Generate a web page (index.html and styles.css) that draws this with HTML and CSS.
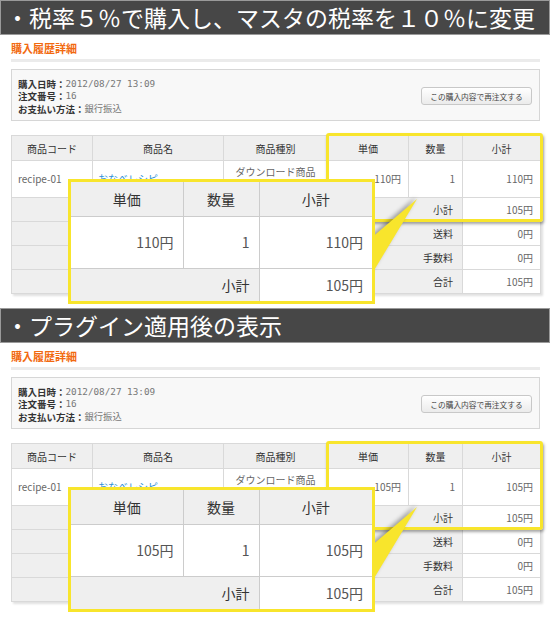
FILE: index.html
```html
<!DOCTYPE html>
<html lang="ja">
<head>
<meta charset="utf-8">
<title>購入履歴詳細</title>
<link rel="stylesheet" href="styles.css">
</head>
<body>
<section class="shot">
  <h1 class="bar">・税率５％で購入し、マスタの税率を１０％に変更</h1>
  <div class="page">
    <h2 class="page-title">購入履歴詳細</h2>
    <div class="info">
      <dl class="info-list">
        <div class="info-row"><dt>購入日時：</dt><dd>2012/08/27 13:09</dd></div>
        <div class="info-row"><dt>注文番号：</dt><dd>16</dd></div>
        <div class="info-row"><dt>お支払い方法：</dt><dd>銀行振込</dd></div>
      </dl>
      <button class="reorder">この購入内容で再注文する</button>
    </div>
    <table class="items">
      <colgroup>
        <col class="c-code"><col class="c-name"><col class="c-kind"><col class="c-price"><col class="c-qty"><col class="c-sub">
      </colgroup>
      <tr class="head">
        <th>商品コード</th><th>商品名</th><th>商品種別</th><th>単価</th><th>数量</th><th>小計</th>
      </tr>
      <tr class="item">
        <td class="code">recipe-01</td>
        <td class="name"><a href="#">おなべレシピ</a></td>
        <td class="kind">ダウンロード商品</td>
        <td class="num">110円</td>
        <td class="num">1</td>
        <td class="num">110円</td>
      </tr>
      <tr class="sum"><th colspan="5">小計</th><td class="num">105円</td></tr>
      <tr class="sum"><th colspan="5">送料</th><td class="num">0円</td></tr>
      <tr class="sum"><th colspan="5">手数料</th><td class="num">0円</td></tr>
      <tr class="sum"><th colspan="5">合計</th><td class="num">105円</td></tr>
    </table>
  </div>
  <div class="highlight"></div>
  <svg class="pointer" viewBox="0 0 70 90" width="70" height="90"><polygon points="8,50 55,10 8,88" fill="#f8e52c"/></svg>
  <div class="callout">
    <table class="zoom">
      <colgroup><col class="z-price"><col class="z-qty"><col class="z-sub"></colgroup>
      <tr class="z-head"><th>単価</th><th>数量</th><th>小計</th></tr>
      <tr class="z-item"><td>110円</td><td>1</td><td>110円</td></tr>
      <tr class="z-sum"><th colspan="2">小計</th><td>105円</td></tr>
    </table>
  </div>
</section>

<section class="shot">
  <h1 class="bar">・プラグイン適用後の表示</h1>
  <div class="page">
    <h2 class="page-title">購入履歴詳細</h2>
    <div class="info">
      <dl class="info-list">
        <div class="info-row"><dt>購入日時：</dt><dd>2012/08/27 13:09</dd></div>
        <div class="info-row"><dt>注文番号：</dt><dd>16</dd></div>
        <div class="info-row"><dt>お支払い方法：</dt><dd>銀行振込</dd></div>
      </dl>
      <button class="reorder">この購入内容で再注文する</button>
    </div>
    <table class="items">
      <colgroup>
        <col class="c-code"><col class="c-name"><col class="c-kind"><col class="c-price"><col class="c-qty"><col class="c-sub">
      </colgroup>
      <tr class="head">
        <th>商品コード</th><th>商品名</th><th>商品種別</th><th>単価</th><th>数量</th><th>小計</th>
      </tr>
      <tr class="item">
        <td class="code">recipe-01</td>
        <td class="name"><a href="#">おなべレシピ</a></td>
        <td class="kind">ダウンロード商品</td>
        <td class="num">105円</td>
        <td class="num">1</td>
        <td class="num">105円</td>
      </tr>
      <tr class="sum"><th colspan="5">小計</th><td class="num">105円</td></tr>
      <tr class="sum"><th colspan="5">送料</th><td class="num">0円</td></tr>
      <tr class="sum"><th colspan="5">手数料</th><td class="num">0円</td></tr>
      <tr class="sum"><th colspan="5">合計</th><td class="num">105円</td></tr>
    </table>
  </div>
  <div class="highlight"></div>
  <svg class="pointer" viewBox="0 0 70 90" width="70" height="90"><polygon points="8,50 55,10 8,88" fill="#f8e52c"/></svg>
  <div class="callout">
    <table class="zoom">
      <colgroup><col class="z-price"><col class="z-qty"><col class="z-sub"></colgroup>
      <tr class="z-head"><th>単価</th><th>数量</th><th>小計</th></tr>
      <tr class="z-item"><td>105円</td><td>1</td><td>105円</td></tr>
      <tr class="z-sum"><th colspan="2">小計</th><td>105円</td></tr>
    </table>
  </div>
</section>
</body>
</html>
```

FILE: styles.css
```css
* { box-sizing: border-box; }
html, body { margin: 0; padding: 0; background: #fff; }
body {
  width: 550px;
  font-family: "Noto Sans CJK JP", "DejaVu Sans", sans-serif;
  color: #333;
}

.shot { position: relative; height: 308px; }

.bar {
  margin: 0;
  height: 35px;
  background: #474747;
  color: #fff;
  font-weight: 400;
  font-size: 23px;
  line-height: 32px;
  padding-left: 5px;
  border: 1px solid #9a9a9a;
  white-space: nowrap;
  overflow: hidden;
}

.page { padding: 0 10px 0 11px; }

.page-title {
  margin: 6px 0 0;
  font-size: 11px;
  line-height: 14px;
  font-weight: bold;
  color: #f26a10;
  padding-bottom: 4px;
  border-bottom: 3px solid #ebebeb;
}

.info {
  margin-top: 7px;
  height: 52px;
  border: 1px solid #d6d6d6;
  background: #f8f8f8;
  display: flex;
  align-items: center;
  justify-content: space-between;
  padding: 3px 7px 0 6px;
}
.info-list { margin: 0; font-size: 9.5px; line-height: 12.5px; }
.info-row { display: flex; }
.info-row dt { font-weight: bold; color: #333; }
.info-row dd { margin: 0; color: #777; font-family: "DejaVu Sans Mono", "Noto Sans CJK JP", monospace; font-size: 9.3px; }

.reorder {
  width: 111px;
  height: 18px;
  margin-top: -1px;
  padding: 0;
  font-family: "Noto Sans CJK JP", sans-serif;
  font-size: 7.7px;
  color: #444;
  border: 1px solid #c8c8c8;
  border-radius: 3px;
  background: linear-gradient(#ffffff, #ebebeb);
}

.items {
  margin-top: 14px;
  width: 529px;
  border-collapse: collapse;
  table-layout: fixed;
  font-size: 10px;
  box-shadow: 2px 2px 2px rgba(0, 0, 0, 0.12);
}
.c-code { width: 81px; }
.c-name { width: 131px; }
.c-kind { width: 104px; }
.c-price { width: 81px; }
.c-qty { width: 54px; }
.c-sub { width: 78px; }

.items th, .items td { border: 1px solid #d9d9d9; padding: 0; }
.items th { background: #efefef; font-weight: normal; color: #333; }
.items .head th { height: 25px; }
.items .item td { height: 37px; background: #fff; color: #666; line-height: 12px; }
.items .code { padding-left: 6px; }
.items .name { padding-left: 5px; }
.items .name a { color: #2b8fd6; text-decoration: none; }
.items .kind { text-align: center; padding-bottom: 14px; }
.items .num { text-align: right; padding-right: 7px; color: #666; }
.items .sum th { height: 24px; text-align: right; padding-right: 9px; }
.items .sum td { background: #fff; }

.highlight {
  position: absolute;
  left: 326px;
  top: 133px;
  width: 217px;
  height: 89px;
  border: 3px solid #f8e52c;
  border-radius: 3px;
  box-shadow: 1px 2px 3px rgba(0, 0, 0, 0.35);
}

.pointer {
  position: absolute;
  left: 362px;
  top: 189px;
  overflow: visible;
  filter: drop-shadow(-1px -2px 2px rgba(0, 0, 0, 0.35));
}

.callout {
  position: absolute;
  left: 68px;
  top: 179px;
  width: 307px;
  height: 125px;
  border: 3px solid #f8e52c;
  background: #fff;
}
.zoom {
  width: 100%;
  height: 100%;
  border-collapse: collapse;
  border-style: hidden;
  table-layout: fixed;
  font-size: 14px;
}
.z-price { width: 112px; }
.z-qty { width: 76px; }
.z-sub { width: 113px; }
.zoom th, .zoom td { border: 1px solid #cccccc; padding: 0; }
.zoom th { background: #efefef; font-weight: normal; color: #333; }
.zoom td { text-align: right; padding-right: 9px; color: #555; background: #fff; }
.z-head th { height: 34px; }
.z-item td { height: 52px; }
.z-sum th { height: 33px; text-align: right; padding-right: 9px; }
```
